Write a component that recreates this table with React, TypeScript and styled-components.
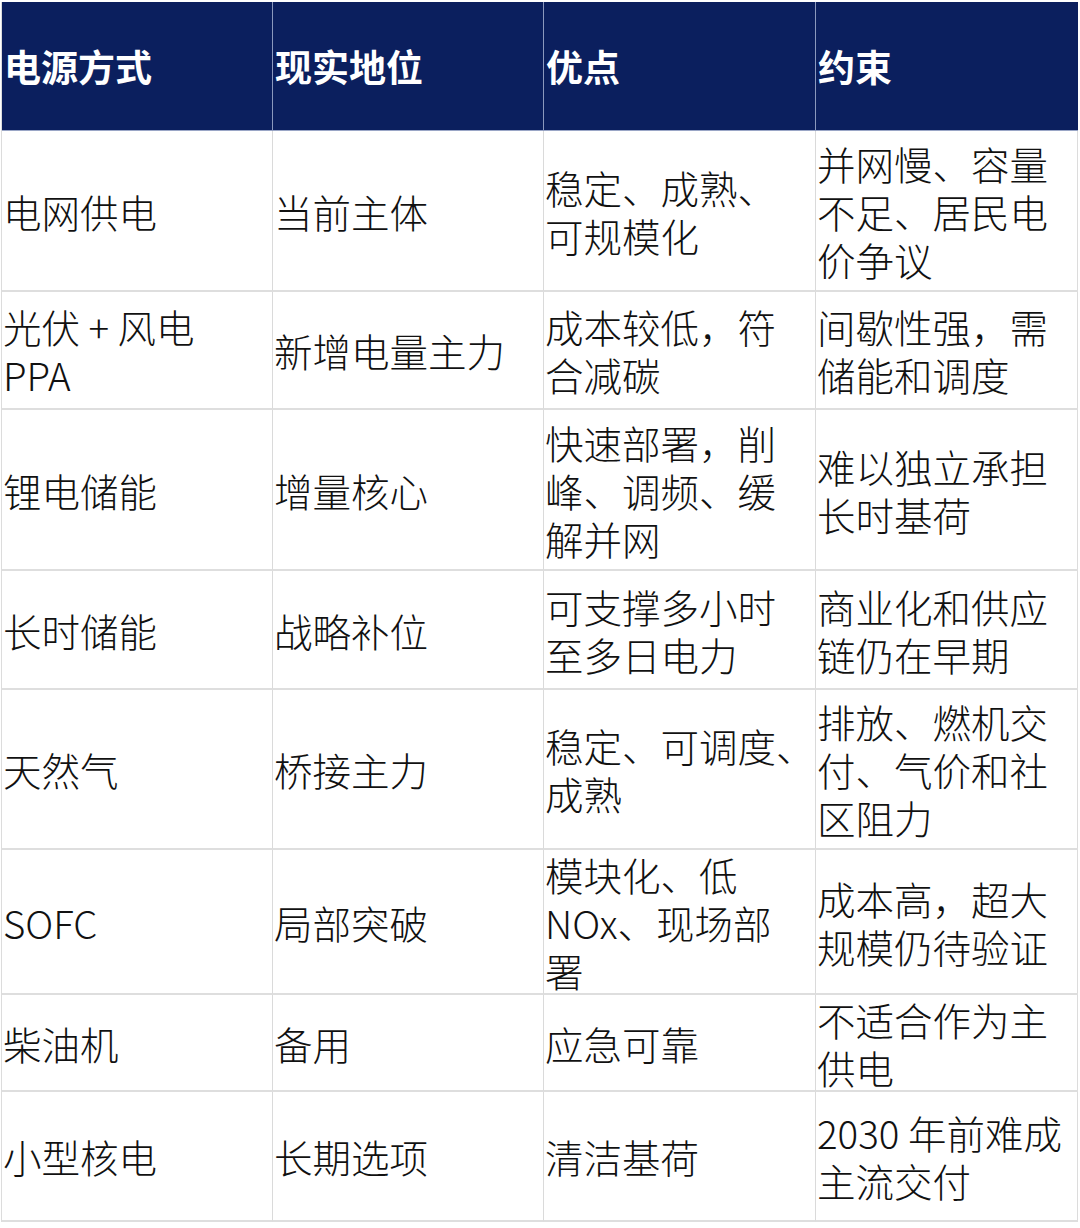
import React from "react";
import styled, { createGlobalStyle } from "styled-components";

const GlobalStyle = createGlobalStyle`
  html, body {
    margin: 0;
    padding: 0;
    background: #ffffff;
  }
  body {
    font-family: "Noto Sans CJK SC", "Noto Sans", sans-serif;
  }
`;

const Page = styled.div`
  padding: 2px 2px 0 1px;
  width: 1080px;
  box-sizing: border-box;
`;

const Table = styled.div`
  display: grid;
  grid-template-columns: 271px 271px 272px 262px;
  border-left: 1px solid #dcdcdc;
  border-right: 1px solid #dcdcdc;
`;

const HeadCell = styled.div`
  height: 129px;
  background: #0b1f5e;
  color: #ffffff;
  font-weight: 700;
  font-size: 37px;
  line-height: 48px;
  display: flex;
  align-items: center;
  padding-left: 2px;
  box-sizing: border-box;
  border-right: 1px solid #8b98bd;
  border-bottom: 1px solid #9aa6c6;
  &:nth-child(4) {
    border-right: none;
  }
`;

const Cell = styled.div<{ $h: number; $last?: boolean }>`
  height: ${(p) => p.$h}px;
  color: #111111;
  font-size: 38.5px;
  font-weight: 300;
  line-height: 48px;
  display: flex;
  align-items: center;
  padding-left: 1px;
  box-sizing: border-box;
  white-space: pre;
  border-right: ${(p) => (p.$last ? "none" : "1px solid #dadada")};
  border-bottom: 2px solid #dedede;
`;

const headers = ["电源方式", "现实地位", "优点", "约束"];

const rows: { h: number; cells: string[] }[] = [
  { h: 161, cells: ["电网供电", "当前主体", "稳定、成熟、\n可规模化", "并网慢、容量\n不足、居民电\n价争议"] },
  { h: 118, cells: ["光伏 + 风电\nPPA", "新增电量主力", "成本较低，符\n合减碳", "间歇性强，需\n储能和调度"] },
  { h: 161, cells: ["锂电储能", "增量核心", "快速部署，削\n峰、调频、缓\n解并网", "难以独立承担\n长时基荷"] },
  { h: 119, cells: ["长时储能", "战略补位", "可支撑多小时\n至多日电力", "商业化和供应\n链仍在早期"] },
  { h: 160, cells: ["天然气", "桥接主力", "稳定、可调度、\n成熟", "排放、燃机交\n付、气价和社\n区阻力"] },
  { h: 145, cells: ["SOFC", "局部突破", "模块化、低\nNOx、现场部\n署", "成本高，超大\n规模仍待验证"] },
  { h: 97, cells: ["柴油机", "备用", "应急可靠", "不适合作为主\n供电"] },
  { h: 130, cells: ["小型核电", "长期选项", "清洁基荷", "2030 年前难成\n主流交付"] },
];

export default function App() {
  return (
    <>
      <GlobalStyle />
      <Page>
        <Table>
          {headers.map((h) => (
            <HeadCell key={h}>{h}</HeadCell>
          ))}
          {rows.map((r, ri) =>
            r.cells.map((c, ci) => (
              <Cell key={`${ri}-${ci}`} $h={r.h} $last={ci === 3}>
                {c}
              </Cell>
            ))
          )}
        </Table>
      </Page>
    </>
  );
}
